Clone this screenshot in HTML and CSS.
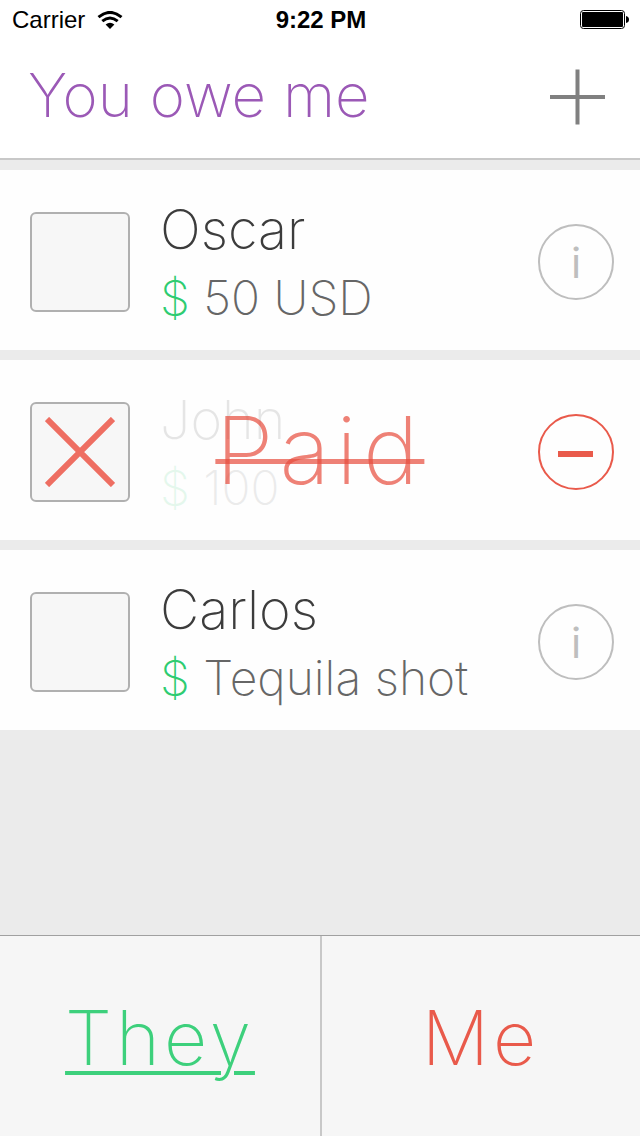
FILE: index.html
```html
<!DOCTYPE html>
<html lang="en">
<head>
<meta charset="UTF-8" />
<meta name="viewport" content="width=device-width, initial-scale=1" />
<title>You owe me</title>
<link rel="stylesheet" href="styles.css">
</head>
<body>
  <div class="status-bar">
    <div class="carrier">
      <span>Carrier</span>
      <svg width="26" height="18" viewBox="0 0 26 18" aria-hidden="true">
        <g fill="none" stroke="#000" stroke-width="3">
          <path d="M1.500 6.200 Q13 -3.400 24.500 6.200" />
          <path d="M5.300 10.200 Q13 3.800 20.700 10.200" />
        </g>
        <path d="M8.600 13.600 Q13 9.800 17.400 13.600 L13 18 Z" />
      </svg>
    </div>
    <time class="clock">9:22 PM</time>
    <div class="battery">
      <svg width="50" height="20" viewBox="0 0 50 20" role="img" aria-label="Battery full">
        <rect x="0.500" y="0.500" width="44" height="18" rx="3" fill="none" stroke="#000" />
        <rect x="2" y="2" width="41" height="15" rx="1" />
        <path d="M46 6 Q49 6.500 49 9.500 Q49 12.500 46 13 Z" />
      </svg>
    </div>
  </div>

  <header class="header">
    <h1>You owe me</h1>
    <button class="add" aria-label="Add debt">
      <svg width="56" height="56" viewBox="0 0 56 56" aria-hidden="true">
        <path d="M0 28 H55 M27.500 0.500 V55.500" stroke="#808080" stroke-width="4" />
      </svg>
    </button>
  </header>

  <main class="debts">
    <article class="debt">
      <label class="check">
        <input type="checkbox" aria-label="Oscar paid">
        <svg class="cross" viewBox="0 0 70 70" aria-hidden="true"><path d="M2 2 L68 68 M68 2 L2 68" /></svg>
      </label>
      <div class="details">
        <h2>Oscar</h2>
        <p><span class="currency">$</span> 50 USD</p>
      </div>
      <button class="round" aria-label="Info about Oscar">i</button>
    </article>

    <article class="debt paid">
      <label class="check">
        <input type="checkbox" aria-label="John paid" checked>
        <svg class="cross" viewBox="0 0 70 70" aria-hidden="true"><path d="M2 2 L68 68 M68 2 L2 68" /></svg>
      </label>
      <div class="details">
        <h2>John</h2>
        <p><span class="currency">$</span> 100</p>
      </div>
      <span class="stamp">Paid</span>
      <button class="round remove" aria-label="Remove John">
        <svg width="36" height="10" viewBox="0 0 36 10" aria-hidden="true"><rect y="4" width="35" height="6" fill="#e95a4b" /></svg>
      </button>
    </article>

    <article class="debt">
      <label class="check">
        <input type="checkbox" aria-label="Carlos paid">
        <svg class="cross" viewBox="0 0 70 70" aria-hidden="true"><path d="M2 2 L68 68 M68 2 L2 68" /></svg>
      </label>
      <div class="details">
        <h2>Carlos</h2>
        <p><span class="currency">$</span> Tequila shot</p>
      </div>
      <button class="round" aria-label="Info about Carlos">i</button>
    </article>
  </main>

  <nav class="tabs">
    <a class="tab they active" href="#they" aria-current="page">They</a>
    <a class="tab me" href="#me">Me</a>
  </nav>
</body>
</html>
```
FILE: styles.css
```css
/* Reset */
* {
  box-sizing: border-box;
}
body {
  background: #ebebeb;
  display: flex;
  flex-direction: column;
  min-height: 100vh;
  margin: 0;
  font-family: Inter, Roboto, sans-serif;
  font-weight: 200;
}
h1, h2, p {
  margin: 0;
  font-weight: 200;
}
button {
  background: none;
  border: none;
  padding: 0;
  font-family: inherit;
  cursor: pointer;
}
svg {
  display: block;
}

/* Status bar */
.status-bar {
  background: #fff;
  display: grid;
  grid-template-columns: 1fr auto 1fr;
  align-items: center;
  height: 40px;
  padding: 0 10px 0 12px;
  font-family: "Liberation Sans", Arial, sans-serif;
  font-size: 24px;
  font-weight: 400;
  color: #000;
}
.carrier {
  display: flex;
  align-items: center;
  gap: 12px;
}
.clock {
  font-weight: 700;
}
.battery {
  justify-self: end;
}

/* Header */
.header {
  background: #fff;
  border-bottom: 2px solid #c8c8c8;
  display: flex;
  align-items: center;
  justify-content: space-between;
  height: 120px;
  padding: 0 34px 4px 28px;
}
.header h1 {
  color: #9b59b6;
  font-size: 60px;
  line-height: 80px;
  padding-bottom: 4px;
}

/* Debts */
.debts {
  flex: 1;
  display: flex;
  flex-direction: column;
  gap: 10px;
  padding: 10px 0;
}
.debt {
  background: #fefefe;
  display: flex;
  align-items: center;
  gap: 30px;
  min-height: 180px;
  padding: 20px 26px 16px 30px;
  position: relative;
}
.check {
  display: grid;
  place-items: center;
}
.check input,
.cross {
  grid-area: 1 / 1;
}
.check input {
  appearance: none;
  width: 100px;
  height: 100px;
  margin: 0;
  background: #f7f7f7;
  border: 2px solid #b0b0b0;
  border-radius: 6px;
}
.cross {
  display: none;
  width: 70px;
  stroke: #ee6e62;
  stroke-width: 6;
  pointer-events: none;
}
.check input:checked + .cross {
  display: block;
}
.details {
  flex: 1;
  padding-top: 4px;
}
.details h2 {
  color: #3c3c3c;
  font-size: 54px;
  line-height: 68px;
}
.details p {
  color: #666;
  font-size: 48px;
  line-height: 68px;
}
.details .currency {
  color: #2ecc71;
}
.paid .details {
  opacity: 0.12;
}
.stamp {
  position: absolute;
  top: 50%;
  left: 50%;
  transform: translate(-50%, -50%);
  color: rgba(231, 76, 60, 0.7);
  font-size: 94px;
  line-height: 120px;
  letter-spacing: 6px;
  pointer-events: none;
}
/* strike sits below the middle of the letters */
.stamp::after {
  content: "";
  position: absolute;
  top: 69px;
  left: 0;
  right: 0;
  height: 5px;
  background: rgba(231, 76, 60, 0.7);
}
.round {
  display: grid;
  place-items: center;
  width: 76px;
  height: 76px;
  border: 2px solid #bebebe;
  border-radius: 50%;
  color: #bebebe;
  font-size: 42px;
  font-weight: 400;
}
.round.remove {
  border-color: #e95a4b;
}

/* Tabs */
.tabs {
  background: #f6f6f6;
  border-top: 1px solid #a0a0a0;
  display: grid;
  grid-template-columns: 1fr 1fr;
}
.tab {
  height: 200px;
  font-size: 75px;
  line-height: 204px;
  letter-spacing: 4px;
  text-align: center;
  text-decoration: none;
}
.they {
  color: #3dd07c;
}
.me {
  color: #e95a4b;
  border-left: 2px solid #c8c8c8;
}
.tab.active {
  text-decoration: underline;
  text-decoration-thickness: 4px;
  text-underline-offset: 6px;
}
```
